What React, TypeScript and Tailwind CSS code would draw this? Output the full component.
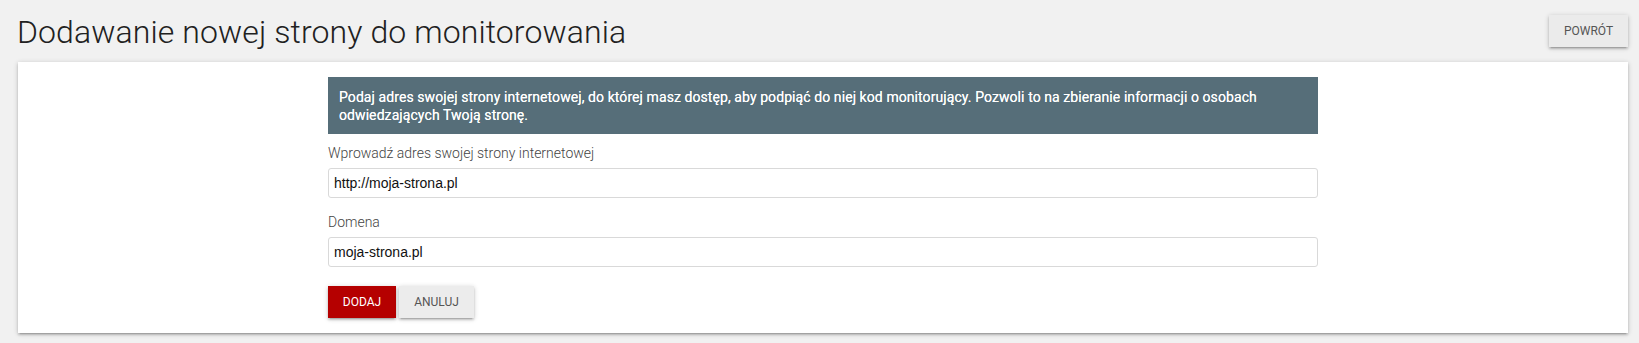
import React from "react";

export default function App() {
  const shadow =
    "shadow-[0_2px_2px_0_rgba(0,0,0,0.14),0_3px_1px_-2px_rgba(0,0,0,0.12),0_1px_5px_0_rgba(0,0,0,0.2)]";
  return (
    <div className="h-[343px] w-full bg-[#f1f1f1] overflow-hidden" style={{ fontFamily: "Roboto, 'Liberation Sans', sans-serif" }}>
      <div className="flex items-start justify-between pt-[14px] pl-[17px] pr-[11px]">
        <h1 className="text-[32px] leading-[36px] font-light text-[#212121] tracking-[0.1px]">
          Dodawanie nowej strony do monitorowania
        </h1>
        <button
          className={`mt-[1px] h-[32px] w-[79px] bg-[#ebebeb] text-[12px] text-[#555] uppercase ${shadow}`}
        >
          Powrót
        </button>
      </div>
      <div className={`ml-[18px] mr-[11px] mt-[12px] bg-white pt-[15px] pb-[15px] ${shadow}`}>
        <div className="w-[990px] mx-auto">
          <div className="bg-[#566e79] text-white text-[14px] font-normal tracking-[0.08px] leading-[18px] pt-[11px] pb-[10px] px-[11px] [text-shadow:0_0_0.4px_rgba(255,255,255,0.9)]">
            Podaj adres swojej strony internetowej, do której masz dostęp, aby podpiąć do niej kod monitorujący. Pozwoli to na zbieranie informacji o osobach odwiedzających Twoją stronę.
          </div>
          <div className="mt-[9px] text-[14px] leading-[20px] font-light text-[#444]">
            Wprowadź adres swojej strony internetowej
          </div>
          <div
            className="mt-[5px] h-[30px] border border-[#d9d9d9] rounded-[3px] flex items-center pl-[5px] text-[14px] text-[#111]"
            style={{ fontFamily: "'Liberation Sans', Arial, sans-serif" }}
          >
            http://moja-strona.pl
          </div>
          <div className="mt-[14px] text-[14px] leading-[20px] font-light text-[#444]">Domena</div>
          <div
            className="mt-[5px] h-[30px] border border-[#d9d9d9] rounded-[3px] flex items-center pl-[5px] text-[14px] text-[#111]"
            style={{ fontFamily: "'Liberation Sans', Arial, sans-serif" }}
          >
            moja-strona.pl
          </div>
          <div className="mt-[19px] flex gap-[3px]">
            <button className={`h-[32px] w-[68px] bg-[#b50000] text-white text-[12px] uppercase ${shadow}`}>
              Dodaj
            </button>
            <button className={`h-[32px] w-[75px] bg-[#ececec] text-[#555] text-[12px] uppercase ${shadow}`}>
              Anuluj
            </button>
          </div>
        </div>
      </div>
    </div>
  );
}
